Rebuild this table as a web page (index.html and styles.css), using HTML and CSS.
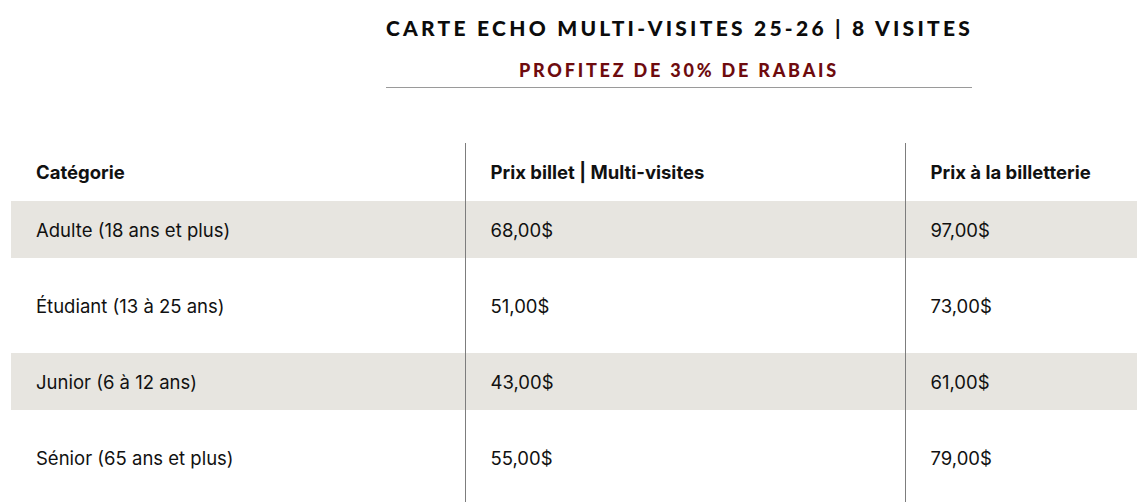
FILE: index.html
```html
<!DOCTYPE html>
<html lang="fr">
<head>
<meta charset="utf-8">
<title>Carte Echo Multi-visites</title>
<link rel="stylesheet" href="styles.css">
</head>
<body>
<header class="intro">
  <h1 class="intro-title">CARTE ECHO MULTI-VISITES 25-26 | 8 VISITES</h1>
  <p class="intro-sub">PROFITEZ DE 30% DE RABAIS</p>
</header>
<div class="table-wrap">
  <table class="prices">
    <colgroup>
      <col class="c1"><col class="c2"><col class="c3">
    </colgroup>
    <thead>
      <tr class="head-row">
        <th>Catégorie</th>
        <th class="sep">Prix billet | Multi-visites</th>
        <th class="sep">Prix à la billetterie</th>
      </tr>
    </thead>
    <tbody>
      <tr class="row shade"><td>Adulte (18 ans et plus)</td><td class="sep">68,00$</td><td class="sep">97,00$</td></tr>
      <tr class="row tall"><td>Étudiant (13 à 25 ans)</td><td class="sep">51,00$</td><td class="sep">73,00$</td></tr>
      <tr class="row shade"><td>Junior (6 à 12 ans)</td><td class="sep">43,00$</td><td class="sep">61,00$</td></tr>
      <tr class="row tall"><td>Sénior (65 ans et plus)</td><td class="sep">55,00$</td><td class="sep">79,00$</td></tr>
    </tbody>
  </table>
</div>
</body>
</html>
```
FILE: styles.css
```css
html, body {
  margin: 0;
  padding: 0;
  background: #ffffff;
  overflow: hidden;
}
body {
  font-family: "Inter", "Open Sans", sans-serif;
  color: #111111;
}
.intro {
  width: 586px;
  margin-left: 386px;
  padding-top: 14px;
  border-bottom: 1px solid #9a9a9a;
  text-align: center;
}
.intro-title {
  margin: 0;
  font-family: "Lato", sans-serif;
  font-weight: 900;
  font-size: 21px;
  line-height: 28px;
  letter-spacing: 3.25px;
  color: #0c0c0c;
  white-space: nowrap;
}
.intro-sub {
  margin: 18px 0 0;
  padding-bottom: 7px;
  font-family: "Lato", sans-serif;
  font-weight: 900;
  font-size: 18px;
  line-height: 20px;
  letter-spacing: 2.8px;
  color: #6e0b0e;
  white-space: nowrap;
}
.table-wrap {
  margin-top: 55px;
  padding-left: 11px;
}
.prices {
  border-collapse: collapse;
  width: 1126px;
  table-layout: fixed;
}
.c1 { width: 454px; }
.c2 { width: 440px; }
.c3 { width: 232px; }
.prices th,
.prices td {
  padding: 0 25px;
  text-align: left;
  vertical-align: middle;
  font-size: 18.5px;
  white-space: nowrap;
}
.prices th {
  font-weight: 700;
  height: 58px;
}
.prices td {
  font-weight: 400;
}
.sep {
  border-left: 1px solid #7d7d7d;
}
.row.shade {
  background: #e7e5e0;
}
.row.shade td { height: 57px; }
.row.tall td { height: 95px; }
```
